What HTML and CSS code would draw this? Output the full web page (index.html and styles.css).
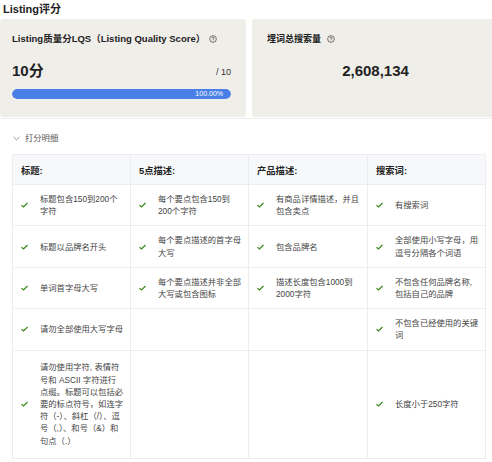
FILE: index.html
```html
<!DOCTYPE html>
<html>
<head>
<meta charset="utf-8">
<link rel="stylesheet" href="styles.css">
</head>
<body>
<div class="page">
  <div class="title">Listing评分</div>
  <div class="cards">
    <div class="card card-lqs">
      <div class="card-label">Listing质量分LQS（Listing Quality Score）<svg class="help" viewBox="0 0 10 10"><circle cx="5" cy="5" r="4.2" fill="none" stroke="#444" stroke-width="0.9"/><path d="M3.6 4 Q3.6 2.7 5 2.7 Q6.4 2.7 6.4 3.9 Q6.4 4.7 5 5.2 L5 6" fill="none" stroke="#444" stroke-width="0.9"/><circle cx="5" cy="7.4" r="0.55" fill="#444"/></svg></div>
      <div class="score-row"><span class="score">10分</span><span class="max">/ 10</span></div>
      <div class="bar"><div class="bar-fill" style="width:100%">100.00%</div></div>
    </div>
    <div class="card card-vol">
      <div class="card-label">埋词总搜索量<svg class="help" viewBox="0 0 10 10"><circle cx="5" cy="5" r="4.2" fill="none" stroke="#444" stroke-width="0.9"/><path d="M3.6 4 Q3.6 2.7 5 2.7 Q6.4 2.7 6.4 3.9 Q6.4 4.7 5 5.2 L5 6" fill="none" stroke="#444" stroke-width="0.9"/><circle cx="5" cy="7.4" r="0.55" fill="#444"/></svg></div>
      <div class="volume">2,608,134</div>
    </div>
  </div>
  <div class="divider"></div>
  <div class="collapse"><svg class="chev" viewBox="0 0 8 5"><path d="M0.6 0.8 L4 4 L7.4 0.8" fill="none" stroke="#777" stroke-width="0.9"/></svg>打分明细</div>
  <table class="grid">
    <colgroup><col class="c1"><col class="c2"><col class="c3"><col class="c4"></colgroup>
    <thead>
      <tr><th>标题:</th><th>5点描述:</th><th>产品描述:</th><th>搜索词:</th></tr>
    </thead>
    <tbody>
      <tr>
        <td><div class="item"><svg class="ok" viewBox="0 0 8 6"><path d="M0.6 3.2 L2.9 5.2 L7.4 0.8" fill="none" stroke="#3d8a1f" stroke-width="1.5"/></svg><span>标题包含150到200个字符</span></div></td>
        <td><div class="item"><svg class="ok" viewBox="0 0 8 6"><path d="M0.6 3.2 L2.9 5.2 L7.4 0.8" fill="none" stroke="#3d8a1f" stroke-width="1.5"/></svg><span>每个要点包含150到200个字符</span></div></td>
        <td><div class="item"><svg class="ok" viewBox="0 0 8 6"><path d="M0.6 3.2 L2.9 5.2 L7.4 0.8" fill="none" stroke="#3d8a1f" stroke-width="1.5"/></svg><span>有商品详情描述，并且包含卖点</span></div></td>
        <td><div class="item"><svg class="ok" viewBox="0 0 8 6"><path d="M0.6 3.2 L2.9 5.2 L7.4 0.8" fill="none" stroke="#3d8a1f" stroke-width="1.5"/></svg><span>有搜索词</span></div></td>
      </tr>
      <tr>
        <td><div class="item"><svg class="ok" viewBox="0 0 8 6"><path d="M0.6 3.2 L2.9 5.2 L7.4 0.8" fill="none" stroke="#3d8a1f" stroke-width="1.5"/></svg><span>标题以品牌名开头</span></div></td>
        <td><div class="item"><svg class="ok" viewBox="0 0 8 6"><path d="M0.6 3.2 L2.9 5.2 L7.4 0.8" fill="none" stroke="#3d8a1f" stroke-width="1.5"/></svg><span>每个要点描述的首字母大写</span></div></td>
        <td><div class="item"><svg class="ok" viewBox="0 0 8 6"><path d="M0.6 3.2 L2.9 5.2 L7.4 0.8" fill="none" stroke="#3d8a1f" stroke-width="1.5"/></svg><span>包含品牌名</span></div></td>
        <td><div class="item"><svg class="ok" viewBox="0 0 8 6"><path d="M0.6 3.2 L2.9 5.2 L7.4 0.8" fill="none" stroke="#3d8a1f" stroke-width="1.5"/></svg><span>全部使用小写字母，用逗号分隔各个词语</span></div></td>
      </tr>
      <tr>
        <td><div class="item"><svg class="ok" viewBox="0 0 8 6"><path d="M0.6 3.2 L2.9 5.2 L7.4 0.8" fill="none" stroke="#3d8a1f" stroke-width="1.5"/></svg><span>单词首字母大写</span></div></td>
        <td><div class="item"><svg class="ok" viewBox="0 0 8 6"><path d="M0.6 3.2 L2.9 5.2 L7.4 0.8" fill="none" stroke="#3d8a1f" stroke-width="1.5"/></svg><span>每个要点描述并非全部大写或包含图标</span></div></td>
        <td><div class="item"><svg class="ok" viewBox="0 0 8 6"><path d="M0.6 3.2 L2.9 5.2 L7.4 0.8" fill="none" stroke="#3d8a1f" stroke-width="1.5"/></svg><span>描述长度包含1000到2000字符</span></div></td>
        <td><div class="item"><svg class="ok" viewBox="0 0 8 6"><path d="M0.6 3.2 L2.9 5.2 L7.4 0.8" fill="none" stroke="#3d8a1f" stroke-width="1.5"/></svg><span>不包含任何品牌名称,包括自己的品牌</span></div></td>
      </tr>
      <tr>
        <td><div class="item"><svg class="ok" viewBox="0 0 8 6"><path d="M0.6 3.2 L2.9 5.2 L7.4 0.8" fill="none" stroke="#3d8a1f" stroke-width="1.5"/></svg><span>请勿全部使用大写字母</span></div></td>
        <td></td>
        <td></td>
        <td><div class="item"><svg class="ok" viewBox="0 0 8 6"><path d="M0.6 3.2 L2.9 5.2 L7.4 0.8" fill="none" stroke="#3d8a1f" stroke-width="1.5"/></svg><span>不包含已经使用的关键词</span></div></td>
      </tr>
      <tr class="tall">
        <td><div class="item"><svg class="ok" viewBox="0 0 8 6"><path d="M0.6 3.2 L2.9 5.2 L7.4 0.8" fill="none" stroke="#3d8a1f" stroke-width="1.5"/></svg><span class="nowrap">请勿使用字符, 表情符<br>号和 ASCII 字符进行<br>点缀。标题可以包括必<br>要的标点符号，如连字<br>符（-）、斜杠（/）、逗<br>号（,）、和号（&amp;）和<br>句点（.）</span></div></td>
        <td></td>
        <td></td>
        <td><div class="item"><svg class="ok" viewBox="0 0 8 6"><path d="M0.6 3.2 L2.9 5.2 L7.4 0.8" fill="none" stroke="#3d8a1f" stroke-width="1.5"/></svg><span>长度小于250字符</span></div></td>
      </tr>
    </tbody>
  </table>
</div>
</body>
</html>
```

FILE: styles.css
```css
html, body {
  margin: 0;
  padding: 0;
  background: #ffffff;
}
body {
  font-family: "Liberation Sans", "Noto Sans CJK SC", sans-serif;
  color: #333;
}
.page {
  width: 492px;
}
.title {
  font-size: 11px;
  font-weight: bold;
  line-height: 19px;
  height: 19px;
  padding-left: 3px;
  color: #222;
}
.cards {
  display: flex;
  gap: 6px;
  height: 98px;
}
.card {
  background: #f0eee9;
  border-radius: 3px;
  box-sizing: border-box;
  padding-top: 14px;
}
.card-lqs {
  width: 246px;
  padding-left: 12px;
  padding-right: 15px;
}
.card-vol {
  flex: 1;
  padding-left: 15px;
  border-radius: 3px 0 0 3px;
}
.card-label {
  font-size: 9px;
  font-weight: bold;
  line-height: 12px;
  height: 12px;
  color: #222;
  display: flex;
  align-items: center;
  white-space: nowrap;
}
.card-lqs .card-label {
  font-size: 9.5px;
}
.help {
  width: 8px;
  height: 8px;
  margin-left: 6px;
  flex: none;
}
.card-lqs .help {
  margin-left: 4px;
}
.score-row {
  display: flex;
  justify-content: space-between;
  align-items: center;
  margin-top: 16px;
  height: 20px;
}
.score {
  font-size: 15px;
  font-weight: bold;
  line-height: 20px;
  color: #222;
}
.max {
  font-size: 9px;
  color: #333;
  padding-top: 1px;
}
.bar {
  margin-top: 8px;
  height: 10px;
  border-radius: 5px;
  background: #e3e3e3;
  overflow: hidden;
}
.bar-fill {
  height: 10px;
  background: #4a7fe8;
  border-radius: 5px;
  color: #fff;
  font-size: 7px;
  line-height: 10px;
  text-align: right;
  padding-right: 8px;
  box-sizing: border-box;
}
.volume {
  margin-top: 16px;
  font-size: 15px;
  font-weight: bold;
  line-height: 20px;
  text-align: center;
  color: #222;
  padding-right: 8px;
}
.divider {
  height: 1px;
  background: #ececec;
  margin-top: 1px;
}
.collapse {
  margin-top: 13px;
  height: 12px;
  line-height: 12px;
  font-size: 8.3px;
  color: #555;
  padding-left: 13px;
  display: flex;
  align-items: center;
}
.chev {
  width: 7px;
  height: 5px;
  margin-right: 5px;
}
.grid {
  margin-top: 10px;
  margin-left: 12px;
  width: 473px;
  table-layout: fixed;
  border-collapse: collapse;
}
.c1 { width: 118px; }
.c2 { width: 118px; }
.c3 { width: 119px; }
.c4 { width: 118px; }
.grid th, .grid td {
  border: 1px solid #ebedf0;
  padding: 0;
}
.grid th {
  background: #f7f8fa;
  height: 29px;
  text-align: left;
  padding-left: 8px;
  font-size: 9.3px;
  font-weight: bold;
  color: #222;
}
.grid td {
  height: 40px;
  vertical-align: middle;
}
.grid tr.tall td {
  height: 107px;
}
.item {
  display: flex;
  align-items: center;
  padding: 8px 5px 8px 8px;
}
.ok {
  width: 7px;
  height: 6px;
  flex: none;
  margin-right: 12px;
}
.item span {
  font-size: 8.3px;
  line-height: 12.2px;
  color: #444;
}
.item span.nowrap {
  white-space: nowrap;
}
```
